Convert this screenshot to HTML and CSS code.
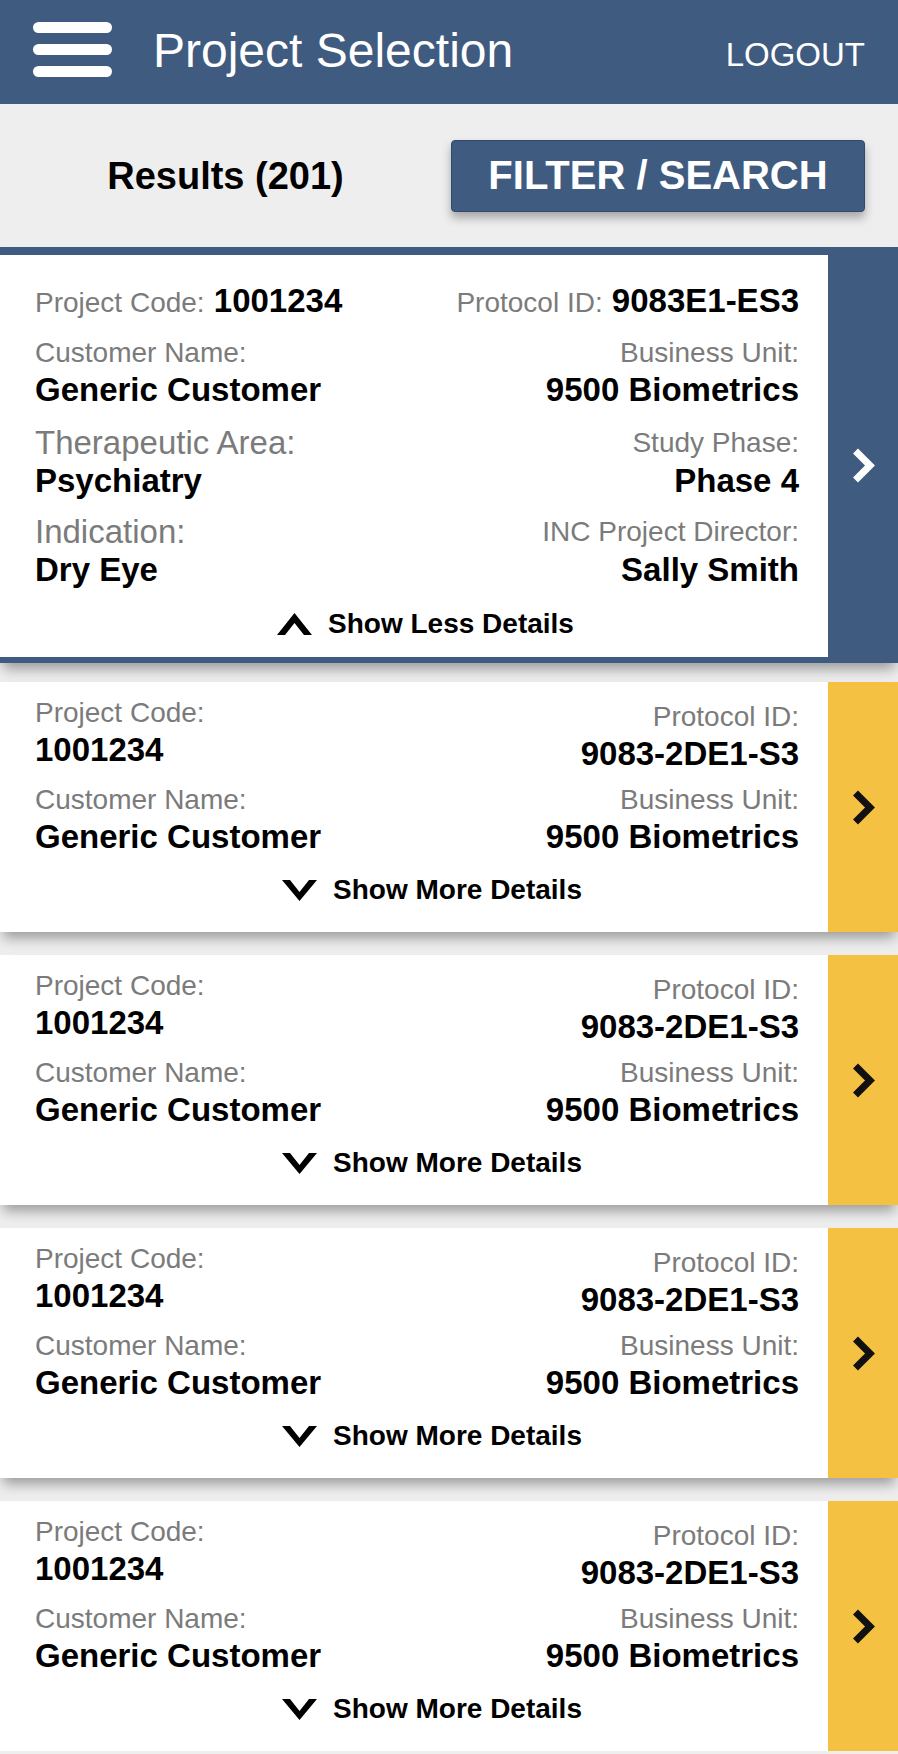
FILE: index.html
```html
<!DOCTYPE html>
<html lang="en">
<head>
<meta charset="utf-8">
<title>Project Selection</title>
<link rel="stylesheet" href="styles.css">
</head>
<body>
<header class="header">
  <div class="menu"><span></span><span></span><span></span></div>
  <h1 class="title">Project Selection</h1>
  <a class="logout" href="#">LOGOUT</a>
</header>

<div class="toolbar">
  <div class="results">Results (201)</div>
  <button class="filter">FILTER / SEARCH</button>
</div>

<main class="list">
  <article class="card expanded">
    <div class="body">
      <div class="row inline">
        <div class="cell"><span class="lbl">Project Code:</span> <span class="val">1001234</span></div>
        <div class="cell right"><span class="lbl">Protocol ID:</span> <span class="val">9083E1-ES3</span></div>
      </div>
      <div class="row">
        <div class="cell"><div class="lbl">Customer Name:</div><div class="val">Generic Customer</div></div>
        <div class="cell right"><div class="lbl">Business Unit:</div><div class="val">9500 Biometrics</div></div>
      </div>
      <div class="row tall">
        <div class="cell"><div class="lbl lg">Therapeutic Area:</div><div class="val">Psychiatry</div></div>
        <div class="cell right"><div class="lbl">Study Phase:</div><div class="val">Phase 4</div></div>
      </div>
      <div class="row tall">
        <div class="cell"><div class="lbl lg">Indication:</div><div class="val">Dry Eye</div></div>
        <div class="cell right"><div class="lbl">INC Project Director:</div><div class="val">Sally Smith</div></div>
      </div>
      <div class="toggle">
        <svg width="35" height="22" viewBox="0 0 35 22"><polygon points="0,22 8,22 17.5,10 27,22 35,22 17.5,0" fill="#000"/></svg>
        <span>Show Less Details</span>
      </div>
    </div>
    <div class="go"><svg width="23" height="35" viewBox="0 0 23 35"><polyline points="3.5,3 18,17.5 3.5,32" fill="none" stroke="#fff" stroke-width="7"/></svg></div>
  </article>

  <article class="card">
    <div class="body">
      <div class="row">
        <div class="cell"><div class="lbl">Project Code:</div><div class="val">1001234</div></div>
        <div class="cell right shift"><div class="lbl">Protocol ID:</div><div class="val">9083-2DE1-S3</div></div>
      </div>
      <div class="row">
        <div class="cell"><div class="lbl">Customer Name:</div><div class="val">Generic Customer</div></div>
        <div class="cell right"><div class="lbl">Business Unit:</div><div class="val">9500 Biometrics</div></div>
      </div>
      <div class="toggle">
        <svg width="35" height="21" viewBox="0 0 35 21"><polygon points="0,0 8,0 17.5,12 27,0 35,0 17.5,21" fill="#000"/></svg>
        <span>Show More Details</span>
      </div>
    </div>
    <div class="go"><svg width="23" height="35" viewBox="0 0 23 35"><polyline points="3.5,3 18,17.5 3.5,32" fill="none" stroke="#111" stroke-width="7"/></svg></div>
  </article>

  <article class="card">
    <div class="body">
      <div class="row">
        <div class="cell"><div class="lbl">Project Code:</div><div class="val">1001234</div></div>
        <div class="cell right shift"><div class="lbl">Protocol ID:</div><div class="val">9083-2DE1-S3</div></div>
      </div>
      <div class="row">
        <div class="cell"><div class="lbl">Customer Name:</div><div class="val">Generic Customer</div></div>
        <div class="cell right"><div class="lbl">Business Unit:</div><div class="val">9500 Biometrics</div></div>
      </div>
      <div class="toggle">
        <svg width="35" height="21" viewBox="0 0 35 21"><polygon points="0,0 8,0 17.5,12 27,0 35,0 17.5,21" fill="#000"/></svg>
        <span>Show More Details</span>
      </div>
    </div>
    <div class="go"><svg width="23" height="35" viewBox="0 0 23 35"><polyline points="3.5,3 18,17.5 3.5,32" fill="none" stroke="#111" stroke-width="7"/></svg></div>
  </article>

  <article class="card">
    <div class="body">
      <div class="row">
        <div class="cell"><div class="lbl">Project Code:</div><div class="val">1001234</div></div>
        <div class="cell right shift"><div class="lbl">Protocol ID:</div><div class="val">9083-2DE1-S3</div></div>
      </div>
      <div class="row">
        <div class="cell"><div class="lbl">Customer Name:</div><div class="val">Generic Customer</div></div>
        <div class="cell right"><div class="lbl">Business Unit:</div><div class="val">9500 Biometrics</div></div>
      </div>
      <div class="toggle">
        <svg width="35" height="21" viewBox="0 0 35 21"><polygon points="0,0 8,0 17.5,12 27,0 35,0 17.5,21" fill="#000"/></svg>
        <span>Show More Details</span>
      </div>
    </div>
    <div class="go"><svg width="23" height="35" viewBox="0 0 23 35"><polyline points="3.5,3 18,17.5 3.5,32" fill="none" stroke="#111" stroke-width="7"/></svg></div>
  </article>

  <article class="card">
    <div class="body">
      <div class="row">
        <div class="cell"><div class="lbl">Project Code:</div><div class="val">1001234</div></div>
        <div class="cell right shift"><div class="lbl">Protocol ID:</div><div class="val">9083-2DE1-S3</div></div>
      </div>
      <div class="row">
        <div class="cell"><div class="lbl">Customer Name:</div><div class="val">Generic Customer</div></div>
        <div class="cell right"><div class="lbl">Business Unit:</div><div class="val">9500 Biometrics</div></div>
      </div>
      <div class="toggle">
        <svg width="35" height="21" viewBox="0 0 35 21"><polygon points="0,0 8,0 17.5,12 27,0 35,0 17.5,21" fill="#000"/></svg>
        <span>Show More Details</span>
      </div>
    </div>
    <div class="go"><svg width="23" height="35" viewBox="0 0 23 35"><polyline points="3.5,3 18,17.5 3.5,32" fill="none" stroke="#111" stroke-width="7"/></svg></div>
  </article>
</main>
</body>
</html>
```

FILE: styles.css
```css
* { box-sizing: border-box; }

body {
  margin: 0;
  background: #eeeeee;
  font-family: "Liberation Sans", Arial, sans-serif;
  color: #000;
  overflow: hidden;
}

.header {
  height: 104px;
  background: #3f5b80;
  display: flex;
  align-items: center;
  padding: 0 33px;
  color: #fff;
}

.menu {
  display: flex;
  flex-direction: column;
  gap: 11px;
  width: 79px;
  margin-bottom: 5px;
}

.menu span {
  display: block;
  height: 11px;
  background: #fff;
  border-radius: 6px;
}

.title {
  margin: 0 0 3px 41px;
  font-size: 48px;
  font-weight: normal;
  line-height: 56px;
}

.logout {
  margin-left: auto;
  margin-top: 5px;
  font-size: 33px;
  line-height: 38px;
  color: #fff;
  text-decoration: none;
}

.toolbar {
  height: 143px;
  display: flex;
  align-items: center;
  padding-right: 33px;
}

.results {
  flex: 1;
  text-align: center;
  font-size: 38px;
  font-weight: bold;
  line-height: 44px;
}

.filter {
  width: 414px;
  height: 72px;
  background: #3f5b80;
  color: #fff;
  border: 1px solid #2e4a70;
  border-radius: 4px;
  font-family: "Liberation Sans", Arial, sans-serif;
  font-size: 40px;
  font-weight: bold;
  padding: 0;
  box-shadow: 0 6px 10px rgba(0, 0, 0, 0.3);
}

.card {
  display: flex;
  height: 250px;
  background: #fff;
  box-shadow: 0 9px 12px -3px rgba(0, 0, 0, 0.35);
}

.card + .card { margin-top: 23px; }

.card.expanded {
  height: auto;
  background: #3f5b80;
  padding: 8px 0 6px;
}

.card.expanded + .card { margin-top: 19px; }

.body {
  flex: 1;
  background: #fff;
  padding: 14px 29px 0 35px;
}

.expanded .body { padding: 26px 29px 16px 35px; }

.go {
  width: 70px;
  background: #f4c142;
  display: flex;
  align-items: center;
  justify-content: center;
}

.expanded .go {
  background: transparent;
  padding-top: 18px;
}

.row {
  display: flex;
  justify-content: space-between;
}

.row + .row { margin-top: 13px; }
.row + .row.tall { margin-top: 15px; }
.row.tall + .row.tall { margin-top: 13px; }

.cell.right { text-align: right; }

.shift {
  margin-top: 4px;
  margin-bottom: -4px;
}

.lbl {
  font-size: 28px;
  line-height: 34px;
  color: #7b7b7b;
}

.val {
  font-size: 33px;
  line-height: 40px;
  font-weight: bold;
  color: #000;
}

.row.tall .lbl { line-height: 36px; }
.lbl.lg { font-size: 33px; }

.row.inline .cell {
  font-size: 33px;
  line-height: 40px;
}

.row.inline .lbl,
.row.inline .val { line-height: 40px; }

.toggle {
  display: flex;
  align-items: center;
  justify-content: center;
  gap: 16px;
  margin-top: 16px;
  padding-left: 30px;
  font-size: 28px;
  line-height: 34px;
  font-weight: bold;
}

.expanded .toggle {
  margin-top: 17px;
  padding-left: 17px;
}
```
